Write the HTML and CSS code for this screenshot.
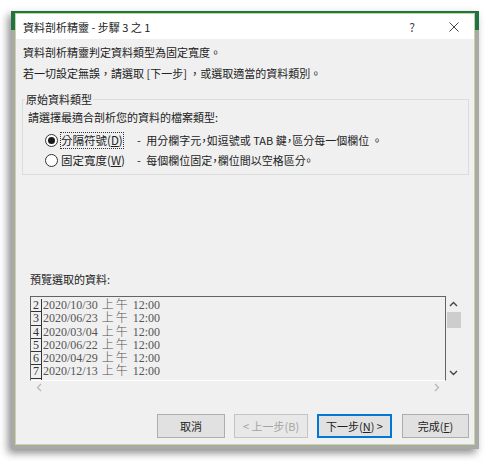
FILE: index.html
```html
<!DOCTYPE html>
<html lang="zh-Hant">
<head>
<meta charset="utf-8">
<title>資料剖析精靈</title>
<link rel="stylesheet" href="styles.css">
</head>
<body>
<div class="frame">
  <div class="dialog">
    <div class="titlebar">
      <div class="title">資料剖析精靈 - 步驟 3 之 1</div>
      <div class="help">?</div>
      <svg class="close" viewBox="0 0 10 10"><path d="M0.5 0.5 L9.5 9.5 M9.5 0.5 L0.5 9.5" stroke="#444" stroke-width="1" fill="none"/></svg>
    </div>
    <div class="body">
      <div class="intro">資料剖析精靈判定資料類型為固定寬度。</div>
      <div class="intro">若一切設定無誤，請選取 [下一步] ，或選取適當的資料類別。</div>
      <fieldset class="group">
        <legend>原始資料類型</legend>
        <div class="prompt">請選擇最適合剖析您的資料的檔案類型:</div>
        <div class="opt first">
          <span class="radio checked"></span>
          <span class="lbl focus">分隔符號(<u>D</u>)</span>
          <span class="desc">-&ensp;用分欄字元，如逗號或 TAB 鍵，區分每一個欄位 &nbsp;。</span>
        </div>
        <div class="opt">
          <span class="radio"></span>
          <span class="lbl">固定寬度(<u>W</u>)</span>
          <span class="desc">-&ensp;每個欄位固定，欄位間以空格區分。</span>
        </div>
      </fieldset>
      <div class="plabel">預覽選取的資料:</div>
      <div class="preview">
        <div class="list">
          <div class="row"><span class="num">2</span><span class="val">2020/10/30 <span class="ap">上午</span> 12:00</span></div>
          <div class="row"><span class="num">3</span><span class="val">2020/06/23 <span class="ap">上午</span> 12:00</span></div>
          <div class="row"><span class="num">4</span><span class="val">2020/03/04 <span class="ap">上午</span> 12:00</span></div>
          <div class="row"><span class="num">5</span><span class="val">2020/06/22 <span class="ap">上午</span> 12:00</span></div>
          <div class="row"><span class="num">6</span><span class="val">2020/04/29 <span class="ap">上午</span> 12:00</span></div>
          <div class="row"><span class="num">7</span><span class="val">2020/12/13 <span class="ap">上午</span> 12:00</span></div>
          <div class="row"><span class="num"></span></div>
        </div>
        <div class="vscroll">
          <svg class="varrow" viewBox="0 0 9 6"><path d="M1 5 L4.5 1.5 L8 5" stroke="#444" stroke-width="1.4" fill="none"/></svg>
          <div class="thumb"></div>
          <div class="track"></div>
          <svg class="varrow" viewBox="0 0 9 6"><path d="M1 1 L4.5 4.5 L8 1" stroke="#444" stroke-width="1.4" fill="none"/></svg>
        </div>
        <div class="hscroll">
          <svg class="harrow" viewBox="0 0 6 9"><path d="M5 1 L1.5 4.5 L5 8" stroke="#b5b5b5" stroke-width="1.2" fill="none"/></svg>
          <svg class="harrow" viewBox="0 0 6 9"><path d="M1 1 L4.5 4.5 L1 8" stroke="#b5b5b5" stroke-width="1.2" fill="none"/></svg>
        </div>
        <div class="corner"></div>
      </div>
      <div class="buttons">
        <button class="btn w68">取消</button>
        <button class="btn w74 disabled">&lt; 上一步(B)</button>
        <button class="btn w75 default">下一步(<u>N</u>) &gt;</button>
        <button class="btn w67">完成(<u>F</u>)</button>
      </div>
    </div>
  </div>
</div>
</body>
</html>
```
FILE: styles.css
```css
* { box-sizing: border-box; }
html, body { margin: 0; padding: 0; background: #fff; }
body {
  width: 491px; height: 461px; overflow: hidden;
  font-family: "Noto Sans CJK TC", "Noto Sans", sans-serif;
  font-size: 11px; color: #222;
  font-feature-settings: "halt";
}
.frame {
  margin: 11px 0 0 11px;
  width: 468px; height: 438px;
  padding: 2px 4px 4px 4px;
  background: linear-gradient(#217346 0, #217346 19px, #a9a9a9 19px);
  box-shadow: -3px 4px 8px rgba(0,0,0,.45);
}
.dialog {
  width: 460px; height: 432px;
  border: 1px solid #c3d897;
  background: #f0f0f0;
  display: flex; flex-direction: column;
}
.titlebar {
  height: 25px; flex: none;
  background: #fff;
  display: flex; align-items: center;
  padding-left: 7px;
}
.title { flex: 1; line-height: 16px; color: #222; }
.help { width: 12px; text-align: center; margin-right: 31px; font-size: 12px; color: #444; line-height: 16px; }
.close { width: 10px; height: 10px; margin-right: 15px; display: block; }
.body { flex: 1; padding: 3px 5px 0 6px; display: flex; flex-direction: column; }
.intro { line-height: 21px; margin-left: 1px; font-feature-settings: normal; }
.group {
  margin: 7px 0 0 0;
  padding: 0 0 4px 0;
  border: 1px solid #dcdcdc;
  min-width: 0;
}
.group legend { padding: 0 1px; margin-left: 2px; line-height: 16px; }
.prompt { line-height: 20px; padding-left: 5px; }
.opt { height: 20px; display: flex; align-items: center; padding-left: 22px; }
.opt.first { margin-top: 3px; }
.radio {
  width: 13px; height: 13px; border-radius: 50%;
  border: 1px solid #333; background: #fff;
  display: flex; align-items: center; justify-content: center; flex: none;
}
.radio.checked::after { content: ""; width: 7px; height: 7px; border-radius: 50%; background: #1a1a1a; }
.lbl {
  width: 64px; height: 17px; margin-left: 2px;
  border: 1px dotted transparent; line-height: 15px;
  white-space: nowrap; flex: none; font-size: 11.5px;
}
.lbl.focus { border-color: #333; }
.desc { margin-left: 13px; white-space: nowrap; line-height: 16px; }
.plabel { margin: 94px 0 0 8px; line-height: 20px; }
.preview {
  margin: 7px 0 0 8px;
  width: 431px; height: 98px;
  display: grid;
  grid-template-columns: 416px 15px;
  grid-template-rows: 85px 13px;
}
.list {
  border-top: 1px solid #646464;
  border-left: 1px solid #646464;
  border-right: 1px solid #646464;
  border-bottom: 1px solid #fff;
  overflow: hidden;
  padding-top: 2px;
  font-family: "Liberation Serif", "Noto Sans CJK TC", serif;
  font-size: 12px;
  font-feature-settings: normal;
}
.row { height: 13.3px; display: flex; align-items: stretch; line-height: 13px; }
.num {
  width: 11px; flex: none; text-align: center;
  border-right: 1px solid #333; border-bottom: 1px solid #333;
  color: #333;
}
.val { padding-left: 1px; color: #555; white-space: nowrap; }
.ap { letter-spacing: 2px; font-weight: 300; margin-left: 1px; }
.vscroll { display: flex; flex-direction: column; align-items: center; }
.varrow { width: 9px; height: 6px; margin: 5px 0; flex: none; }
.thumb { width: 14px; height: 16px; background: #cdcdcd; flex: none; margin-left: 1px; }
.track { flex: 1; }
.hscroll { display: flex; align-items: center; justify-content: space-between; padding: 0 6px; }
.harrow { width: 6px; height: 9px; }
.buttons { margin-top: 20px; display: flex; justify-content: flex-end; gap: 9px; }
.btn {
  height: 24px; padding: 0;
  border: 1px solid #adadad; background: #e1e1e1;
  font-family: inherit; font-size: 11px; color: #222; line-height: 20px;
  font-feature-settings: "halt";
}
.btn.disabled { color: #a3a3a3; border-color: #c4c4c4; background: #e8e8e8; }
.btn.default { border-color: #0078d7; box-shadow: inset 0 0 0 1px #0078d7; }
.w67 { width: 67px; margin-left: 1px; }
.w68 { width: 68px; }
.w74 { width: 74px; }
.w75 { width: 75px; }
```
